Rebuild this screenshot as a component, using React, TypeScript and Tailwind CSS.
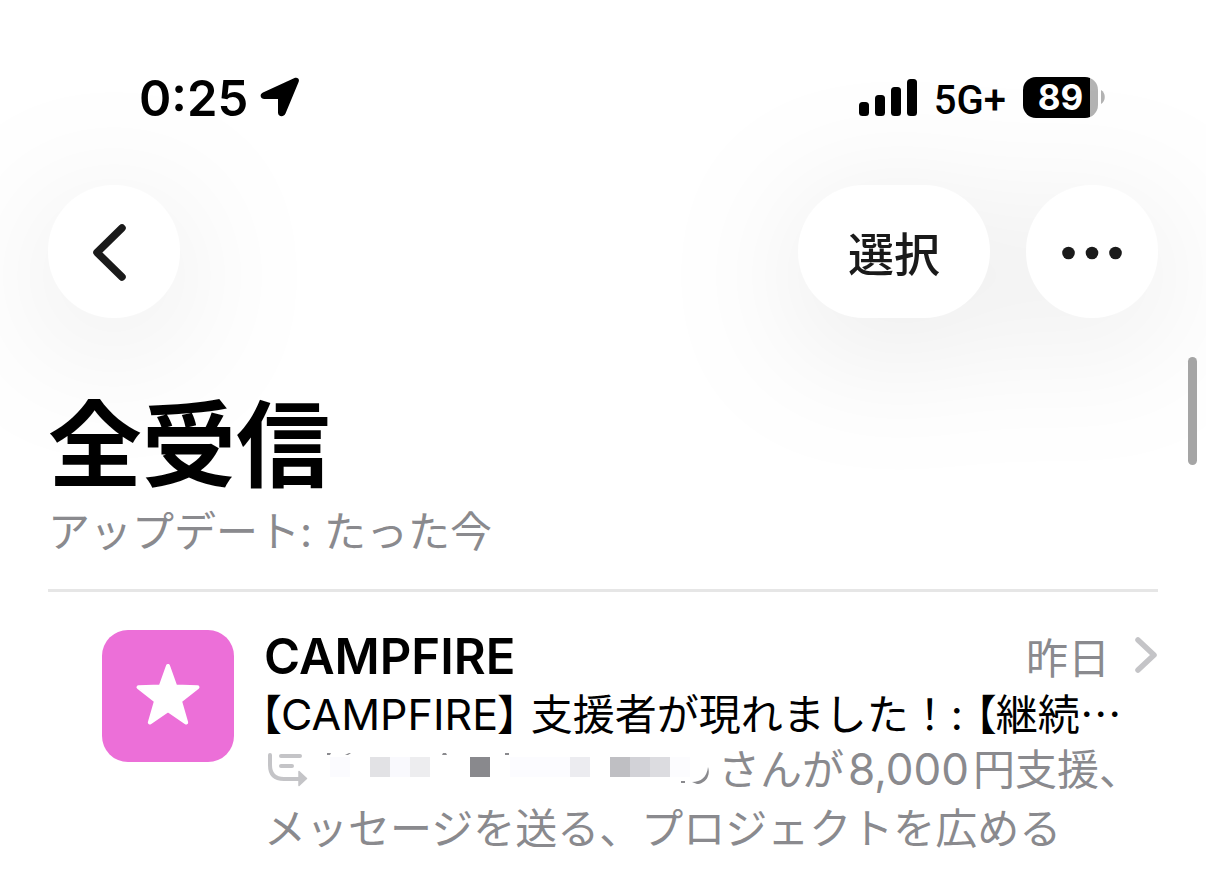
import React from 'react';

const mosaic = [
  { x: 12, fill: '#fbfbfe', w: 20 },
  { x: 52, fill: '#e2e2e5', w: 20 },
  { x: 72, fill: '#f9f9fd', w: 20 },
  { x: 92, fill: '#ededef', w: 20 },
  { x: 152, fill: '#89898d', w: 20 },
  { x: 192, fill: '#fcfcff', w: 60 },
  { x: 252, fill: '#ececf0', w: 20 },
  { x: 292, fill: '#bfbfc3', w: 20 },
  { x: 312, fill: '#d2d2d7', w: 20 },
  { x: 332, fill: '#dcdce0', w: 20 },
  { x: 352, fill: '#fcfcfe', w: 20 },
];

function StatusBar() {
  return (
    <div className="flex h-12 items-center justify-between pl-[139px] pr-[101px]">
      <div className="flex items-center gap-3">
        <span className="pt-1 text-[49px] leading-12 font-semibold">0:25</span>
        <svg width="40" height="40" viewBox="0 0 40 40" aria-hidden="true">
          <path
            d="M3 15.500 34 1.200c3.500-1.500 6 .8 4.500 4L25.500 36.500c-1.800 4.200-7.500 3.500-7.500-1V22H4.500C.2 22-.8 17.300 3 15.500Z"
            fill="#000"
          />
        </svg>
      </div>

      <div className="flex items-center">
        <svg width="58" height="38" viewBox="0 0 58 38" aria-hidden="true">
          <rect x="0" y="24" width="10" height="14" rx="3.500" />
          <rect x="16" y="17" width="10" height="21" rx="3.500" />
          <rect x="32" y="9" width="10" height="29" rx="3.500" />
          <rect x="48" y="1" width="10" height="37" rx="3.500" />
        </svg>
        <span className="ml-[17px] pt-2 font-[Roboto] text-[40px] leading-12 font-medium">5G+</span>
        <div className="ml-[17px] flex h-[41px] w-[75px] items-center justify-center overflow-hidden rounded-[13px] bg-[linear-gradient(to_right,#000_67px,#b3b3b3_67px)]">
          <span className="text-[35px] leading-10 font-bold text-white">89</span>
        </div>
        <svg className="ml-[3px]" width="4" height="14" viewBox="0 0 4 14" aria-hidden="true">
          <path d="M0 0c5 2.500 5 11.500 0 14Z" fill="#b3b3b3" />
        </svg>
      </div>
    </div>
  );
}

function Toolbar() {
  return (
    <nav className="mt-[64px] flex justify-between px-12 text-[#1a1a1a] drop-shadow-[0_24px_70px_rgba(0,0,0,0.1)]">
      <button
        type="button"
        aria-label="戻る"
        className="flex h-[133px] w-[132px] items-center justify-center rounded-full bg-white"
      >
        <svg className="mr-2" width="36" height="60" viewBox="0 0 36 60" fill="none" aria-hidden="true">
          <path d="M30 6 5 30.500 30 55" stroke="currentColor" strokeWidth="7.500" strokeLinecap="round" strokeLinejoin="round" />
        </svg>
      </button>

      <div className="flex gap-9">
        <button type="button" className="h-[133px] w-48 rounded-full bg-white pt-1 text-[46px] leading-12 font-medium">
          選択
        </button>
        <button
          type="button"
          aria-label="その他"
          className="flex h-[133px] w-[132px] items-center justify-center rounded-full bg-white"
        >
          <svg width="60" height="16" viewBox="0 0 60 16" fill="currentColor" aria-hidden="true">
            <circle cx="6.500" cy="9" r="6.300" />
            <circle cx="30" cy="9" r="6.300" />
            <circle cx="53.500" cy="9" r="6.300" />
          </svg>
        </button>
      </div>
    </nav>
  );
}

function MailRow() {
  return (
    <article className="ml-[54px] flex gap-[30px] pt-[38px]">
      <div className="flex size-[132px] shrink-0 items-center justify-center rounded-[26px] bg-[#ec6fd8]">
        <svg width="66" height="66" viewBox="0 0 66 66" aria-hidden="true">
          <path
            d="M33 3 40.300 23.500 62.500 24.300 45 38 51.200 59.500 33 47.200 14.800 59.500 21 38 3.500 24.300 25.700 23.500Z"
            fill="#fff"
            stroke="#fff"
            strokeWidth="4"
            strokeLinejoin="round"
          />
        </svg>
      </div>

      <div className="min-w-0 flex-1 text-[42px]">
        <div className="flex h-[53px] items-center">
          <h2 className="flex-1 text-[49px] leading-[53px] font-semibold">CAMPFIRE</h2>
          <time className="pt-1 text-[42px] leading-[53px] text-[#8a8a8e]">昨日</time>
          <svg className="ml-6" width="24" height="42" viewBox="0 0 24 42" fill="none" aria-hidden="true">
            <path d="M4 4 20 19 4 34" stroke="#c4c4c7" strokeWidth="5.500" strokeLinecap="round" strokeLinejoin="round" />
          </svg>
        </div>

        <p className="-ml-1 leading-[58px] whitespace-nowrap">
          <span className="[font-feature-settings:'palt']">【</span>
          <span className="text-[43px]">CAMPFIRE</span>
          <span className="[font-feature-settings:'palt']">】</span> 支援者が現れました！:{' '}
          <span className="[font-feature-settings:'palt']">【</span>継続<span className="font-['Noto_Sans_CJK_JP']">…</span>
        </p>

        <div className="leading-[59px] whitespace-nowrap text-[#8a8a8e]">
          <p className="-mt-1 flex items-center">
            <svg className="ml-1 shrink-0" width="40" height="34" viewBox="0 0 40 34" fill="none" aria-hidden="true">
              <path d="M2 2V12C2 22 7 26 16 26H32M13 3H32M13 13H24" stroke="#c4c4c7" strokeWidth="4" strokeLinecap="round" />
              <path d="M31 18.500 38.500 25.500 31 32.500Z" fill="#c4c4c7" stroke="#c4c4c7" strokeWidth="1.500" strokeLinejoin="round" />
            </svg>
            {/* Sender name is hidden behind a mosaic */}
            <svg className="ml-[10px] shrink-0" width="400" height="34" viewBox="0 0 400 34" aria-hidden="true">
              {mosaic.map((cell) => (
                <rect key={cell.x} x={cell.x} y="4" width={cell.w} height="20" fill={cell.fill} />
              ))}
              <path d="M9 0h4l-1 2h-3ZM27 2l4-2h2l-3 2ZM124 2l1-2h3l1 2ZM187 0h4v2h-4Z" fill="#8a8a8e" />
              <path d="M363 28h4v2h-4ZM374 29c9 0 15-5 16-15 3 9-3 17-11 17Z" fill="#8a8a8e" />
            </svg>
            <span>さんが</span>
            <span className="mx-1 text-[44px]">8,000</span>
            <span>円支援、</span>
          </p>
          <p>メッセージを送る、プロジェクトを広める</p>
        </div>
      </div>
    </article>
  );
}

export default function App() {
  return (
    <main lang="ja" className="relative min-h-screen overflow-hidden bg-white pt-[73px] pb-7 font-['Inter','Noto_Sans_CJK_JP',sans-serif] text-black">
      <StatusBar />
      <Toolbar />

      <header className="relative mx-12 border-b-[3px] border-[#e6e6e6] pt-[72px] pb-7">
        <h1 className="text-[94px] leading-[113px] font-bold">全受信</h1>
        <p className="text-[42px] leading-[58px] text-[#8a8a8e]">アップデート: たった今</p>
      </header>

      <section className="relative mx-12">
        <MailRow />
      </section>

      {/* Scroll indicator */}
      <div className="absolute top-[357px] right-[9px] h-[108px] w-[9px] rounded-full bg-[#a5a5a5]" />
    </main>
  );
}
